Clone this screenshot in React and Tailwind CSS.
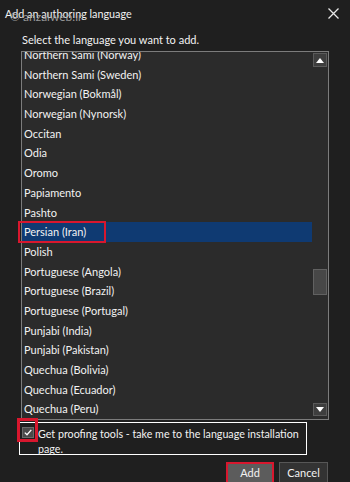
const languages = [
  "Northern Sami (Norway)",
  "Northern Sami (Sweden)",
  "Norwegian (Bokmål)",
  "Norwegian (Nynorsk)",
  "Occitan",
  "Odia",
  "Oromo",
  "Papiamento",
  "Pashto",
  "Persian (Iran)",
  "Polish",
  "Portuguese (Angola)",
  "Portuguese (Brazil)",
  "Portuguese (Portugal)",
  "Punjabi (India)",
  "Punjabi (Pakistan)",
  "Quechua (Bolivia)",
  "Quechua (Ecuador)",
  "Quechua (Peru)",
  "Romanian (Romania)",
];

function Arrow({ down }) {
  return (
    <svg width="8" height="5" viewBox="0 0 8 5">
      {down ? <path d="M0 0 H8 L4 5 Z" fill="#fff" /> : <path d="M0 5 H8 L4 0 Z" fill="#fff" />}
    </svg>
  );
}

export default function App() {
  const selected = "Persian (Iran)";

  return (
    <div className="relative w-[350px] h-[482px] overflow-hidden bg-[#1f1f1f] text-[#f2f2f2] font-['Lato',sans-serif] text-[11px]">
      {/* title bar */}
      <div className="relative flex items-center justify-between h-[28px] pl-[5px] pr-[11px]">
        <span className="text-[10.8px] leading-none">Add an authoring language</span>
        <svg width="11" height="11" viewBox="0 0 11 11" className="mt-[-1px]">
          <path d="M0.5 0.5 L10.5 10.5 M10.5 0.5 L0.5 10.5" stroke="#e8e8e8" strokeWidth="1.3" />
        </svg>
        {/* watermark */}
        <span className="absolute left-[10px] top-[11px] text-[12px] leading-none text-[#a8a8a8]/90">
          © anzalweb.ir
        </span>
      </div>

      <div className="pl-[22px] mt-[3px] h-[18px] leading-[18px]">Select the language you want to add.</div>

      {/* list box */}
      <div className="ml-[21px] mt-[2px] w-[308px] h-[369px] border border-[#7c7c7c] bg-[#2b2b2b] flex overflow-hidden">
        <div className="w-[290px] overflow-hidden">
          <div className="mt-[-7px]">
            {languages.map((lang) => (
              <div
                key={lang}
                className={`h-[19.7px] leading-[19.7px] pl-[2px] whitespace-nowrap ${
                  lang === selected ? "bg-[#0f3a72]" : ""
                }`}
              >
                {lang}
              </div>
            ))}
          </div>
        </div>
        <div className="w-[16px] flex flex-col items-center">
          <div className="w-[14px] h-[14px] mt-[1px] bg-[#3e3e3e] border border-[#5a5a5a] flex items-center justify-center">
            <Arrow />
          </div>
          <div className="h-[202px]" />
          <div className="w-[14px] h-[26px] bg-[#474747] border border-[#616161]" />
          <div className="flex-1" />
          <div className="w-[14px] h-[13px] mb-[3px] bg-[#3e3e3e] border border-[#5a5a5a] flex items-center justify-center">
            <Arrow down />
          </div>
        </div>
      </div>

      {/* checkbox row */}
      <div className="ml-[19px] mt-[2px] w-[288px] h-[33px] border border-white flex items-start pt-[3px]">
        <div className="ml-[2px] mt-[1px] w-[12px] h-[11px] bg-[#4a4a4a] border border-[#6a6a6a] flex items-center justify-center shrink-0">
          <svg width="8" height="7" viewBox="0 0 8 7">
            <path d="M0.8 3.6 L3 5.8 L7.3 0.9" stroke="#fff" strokeWidth="1.3" fill="none" />
          </svg>
        </div>
        <div className="ml-[4px] leading-[15px] text-[10.7px] whitespace-nowrap">
          Get proofing tools - take me to the language installation
          <br />
          page.
        </div>
      </div>

      {/* buttons */}
      <div className="flex justify-end gap-[5px] pr-[22px] mt-[7px]">
        <div className="w-[48px] h-[22px] bg-[#5c5c5c] border-[2px] border-[#d8172e] flex items-center justify-center">
          Add
        </div>
        <div className="w-[49px] h-[22px] bg-[#333333] border border-[#575757] flex items-center justify-center">
          Cancel
        </div>
      </div>

      {/* red annotation boxes */}
      <div className="absolute left-[18px] top-[221px] w-[88px] h-[22px] border-[2px] border-[#d8172e]" />
      <div className="absolute left-[17px] top-[418px] w-[21px] h-[24px] border-[3px] border-[#d8172e]" />
    </div>
  );
}
